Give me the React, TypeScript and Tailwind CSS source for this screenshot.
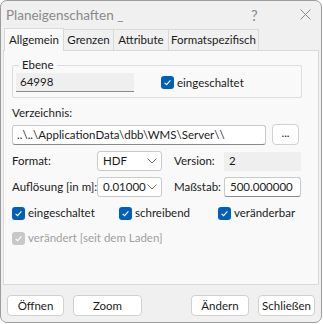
import { ReactNode } from 'react';

const FONT = 'font-["Lato",sans-serif]';

function Check({ disabled = false }: { disabled?: boolean }) {
  return (
    <span
      className={
        'flex h-[13px] w-[13px] shrink-0 items-center justify-center rounded-[3px] ' +
        (disabled ? 'bg-[#c8c8c8]' : 'bg-[#005fb8]')
      }
    >
      <svg width="9" height="9" viewBox="0 0 9 9">
        <path d="M1.6 4.8 L3.6 6.7 L7.4 2.4" fill="none" stroke="#fff" strokeWidth="1.1" />
      </svg>
    </span>
  );
}

function CheckLabel({ label, disabled = false, className = '' }: { label: string; disabled?: boolean; className?: string }) {
  return (
    <div className={'flex items-center gap-[3px] whitespace-nowrap ' + className}>
      <Check disabled={disabled} />
      <span className={disabled ? 'text-[#a0a0a0]' : 'text-[#1a1a1a]'}>{label}</span>
    </div>
  );
}

function Select({ value }: { value: string }) {
  return (
    <div className="flex h-[20px] w-[65px] shrink-0 items-center justify-between rounded-[3px] border border-[#c9c9c9] bg-white pl-[5px] pr-[4px]">
      <span>{value}</span>
      <svg width="10" height="6" viewBox="0 0 10 6">
        <path d="M0.5 0.5 L5 5 L9.5 0.5" fill="none" stroke="#6a6a6a" strokeWidth="1" />
      </svg>
    </div>
  );
}

function Button({ children, className = '' }: { children: ReactNode; className?: string }) {
  return (
    <div
      className={
        'flex h-[21px] shrink-0 items-center justify-center rounded-[4px] border border-[#d0d0d0] bg-white ' + className
      }
    >
      {children}
    </div>
  );
}

export default function App() {
  return (
    <div className={`h-[324px] w-[323px] bg-white text-[11.5px] leading-[14px] text-[#1a1a1a] ${FONT}`}>
      <div className="flex h-[323px] w-[322px] flex-col rounded-[7px] border border-[#9c9c9c] bg-[#f0f0f0]">
        {/* Title bar */}
        <div className="flex h-[27px] items-center whitespace-nowrap pl-[5px] text-[13.5px] leading-[18px] text-[#8a8a8a]">
          <span className="w-[245px]">Planeigenschaften _</span>
          <span className="text-[15px]">?</span>
          <svg className="ml-[42px]" width="11" height="11" viewBox="0 0 11 11">
            <path d="M0.5 0.5 L10.5 10.5 M10.5 0.5 L0.5 10.5" stroke="#8a8a8a" strokeWidth="1" />
          </svg>
        </div>

        {/* Tabs */}
        <div className="relative z-10 flex h-[22px] items-end whitespace-nowrap pl-[3px]">
          <div className="-mb-px flex h-[23px] w-[60px] items-center justify-center border border-b-0 border-[#d9d9d9] bg-[#f9f9f9]">
            Allgemein
          </div>
          <div className="flex h-[21px] w-[50px] items-center justify-center border-t border-r border-[#d9d9d9]">
            Grenzen
          </div>
          <div className="flex h-[21px] w-[55px] items-center justify-center border-t border-r border-[#d9d9d9]">
            Attribute
          </div>
          <div className="flex h-[21px] w-[90px] items-center justify-center border-t border-r border-[#d9d9d9]">
            Formatspezifisch
          </div>
        </div>

        {/* Panel */}
        <div className="mx-[2px] flex h-[235px] flex-col whitespace-nowrap border border-[#d9d9d9] bg-[#f9f9f9] px-[8px]">
          <fieldset className="mt-[7px] h-[40px] w-[290px] rounded-[2px] border border-[#dcdcdc] pl-[3px] pr-[2px]">
            <legend className="ml-[3px] px-[3px]">Ebene</legend>
            <div className="mt-[1px] flex items-center">
              <div className="flex h-[19px] w-[118px] items-center border-b border-[#8a8a8a] bg-[#efefef] pl-[4px]">
                64998
              </div>
              <CheckLabel label="eingeschaltet" className="ml-[27px]" />
            </div>
          </fieldset>

          <div className="mt-[8px]">Verzeichnis:</div>
          <div className="mt-[4px] flex items-center">
            <div className="flex h-[20px] w-[254px] items-center rounded-[3px] border border-[#c9c9c9] border-b-[#8a8a8a] bg-white pl-[4px]">
              ..\..\ApplicationData\dbb\WMS\Server\\
            </div>
            <Button className="ml-[6px] w-[27px] pb-[3px]">...</Button>
          </div>

          <div className="mt-[6px] flex items-center">
            <span className="w-[85px] shrink-0">Format:</span>
            <Select value="HDF" />
            <span className="ml-[12px] w-[50px] shrink-0">Version:</span>
            <div className="flex h-[19px] w-[77px] items-center bg-[#efefef] pl-[5px]">2</div>
          </div>

          <div className="mt-[6px] flex items-center">
            <span className="w-[85px] shrink-0">Auflösung [in m]:</span>
            <Select value="0.01000" />
            <span className="ml-[12px] w-[50px] shrink-0">Maßstab:</span>
            <div className="flex h-[20px] w-[77px] items-center rounded-[3px] border border-[#c9c9c9] border-b-[#8a8a8a] bg-white pl-[5px]">
              500.000000
            </div>
          </div>

          <div className="mt-[9px] flex items-center">
            <CheckLabel label="eingeschaltet" className="w-[107px]" />
            <CheckLabel label="schreibend" className="w-[99px]" />
            <CheckLabel label="veränderbar" />
          </div>

          <CheckLabel label="verändert [seit dem Laden]" disabled className="mt-[11px]" />
        </div>

        {/* Buttons */}
        <div className="mt-[10px] flex whitespace-nowrap px-[6px]">
          <Button className="w-[57px]">Öffnen</Button>
          <Button className="ml-[9px] w-[69px]">Zoom</Button>
          <Button className="ml-auto w-[58px]">Ändern</Button>
          <Button className="ml-[9px] w-[57px]">Schließen</Button>
        </div>
      </div>
    </div>
  );
}
